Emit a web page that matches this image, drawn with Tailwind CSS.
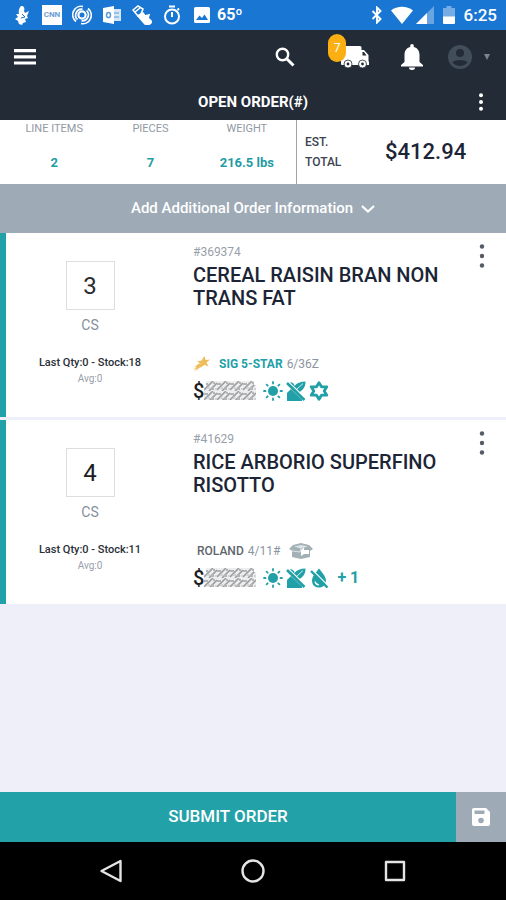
<!DOCTYPE html>
<html lang="en">
<head>
<meta charset="utf-8">
<meta name="viewport" content="width=device-width, initial-scale=1">
<title>Open Order</title>
<script src="https://cdn.jsdelivr.net/npm/@tailwindcss/browser@4"></script>
</head>
<body class="flex min-h-screen flex-col bg-[#efeffa] font-['Roboto',sans-serif] text-[#1c2536]">

<svg class="absolute h-0 w-0" aria-hidden="true">
  <defs>
  <pattern id="mosaic" width="13" height="10" patternUnits="userSpaceOnUse"><path d="M0 0h13v10H0z" fill="#eeeeef"/><path d="M0 9L9 0M5 10L13 2" stroke="#9c9ea0" stroke-width="1.600"/><path d="M0 2h4v2H0zM7 6h3v3H7zM9 1h2v2H9z" fill="#b3b5b7"/><path d="M3 6h3v2H3zM11 7h2v2h-2z" fill="#d2d3d5"/></pattern>
  </defs>
  <symbol id="kebab" viewBox="0 0 6 24"><circle cx="3" cy="2.500" r="2.200"/><circle cx="3" cy="12" r="2.200"/><circle cx="3" cy="21.500" r="2.200"/></symbol>
  <symbol id="sun" viewBox="0 0 20 20"><circle cx="10" cy="10" r="5"/><g stroke="currentColor" stroke-width="1.800" stroke-linecap="round"><path d="M10 1v1.500M10 17.500v1.500M1 10h1.500M17.500 10h1.500M3.600 3.600l1.100 1.100M15.300 15.300l1.100 1.100M3.600 16.400l1.100-1.100M15.300 4.700l1.100-1.100"/></g></symbol>
  <symbol id="nogluten" viewBox="0 0 20 20"><path d="M1 20V12L5 8L16 18.500V20Z"/><path d="M6.500 6C4.500 5 4 3 4.500 1C7.500 1.500 8.500 3.500 8.500 5C10.500 2 14.500 .500 19.500 .500C19.500 5 18 9 12.500 11.500Z"/><path d="M10.500 8.500L17 2.500" stroke="#fff" stroke-width=".8"/><path d="M2 .500L20 17.500" stroke="#fff" stroke-width="1.200"/><path d="M1 2L18.500 19" stroke="currentColor" stroke-width="2.600"/></symbol>
  <symbol id="hexstar" viewBox="0 0 20 20"><path fill="none" stroke="currentColor" stroke-width="2.800" stroke-linejoin="round" d="M10 1.700L12.500 5.800H17.800L15.200 10L17.800 14.200H12.500L10 18.300L7.500 14.200H2.200L4.800 10L2.200 5.800H7.500Z"/></symbol>
  <symbol id="nodrop" viewBox="0 0 20 20"><path d="M10 .500C12.500 4 17 8.500 17 12.500C17 17 14 19.500 10 19.500S3 17 3 12.500C3 8.500 7.500 4 10 .500Z"/><path d="M6 13.500C6.500 15.700 8 16.800 10 17" fill="none" stroke="#fff" stroke-width="1.200"/><path d="M3 1.500L20 18.500" stroke="#fff" stroke-width="1.200"/><path d="M2 3L18.500 19.500" stroke="currentColor" stroke-width="2.400"/></symbol>
  <symbol id="redacted" viewBox="0 0 52 20"><path fill="url(#mosaic)" d="M2 0H50V4H52V19H0V6H2Z"/></symbol>
</svg>

<div class="flex h-[30px] shrink-0 items-center justify-between bg-[#1976d2] pr-[9px] pl-[7px] text-white">
  <div class="flex items-center">
    <div class="grid w-[30px] place-items-center"><svg class="h-5 w-4" viewBox="0 0 16 20" fill="currentColor"><path d="M7 1c3-.5 4 2 3 5l1 2 4-2-2 5 1 2-3 1 1 3-3 1-1 2-3-1-1-3-3-2 3-2-2-3 3 0C4 7 5 3 7 1Z"/><path d="M8 9l3 3-4 1" fill="none" stroke="#1976d2" stroke-width="1"/></svg></div>
    <div class="grid w-[30px] place-items-center"><span class="grid h-5 w-5 place-items-center bg-white text-[8px] font-bold text-[#6e9fd4]">CNN</span></div>
    <div class="grid w-[30px] place-items-center"><svg class="h-5 w-5" viewBox="0 0 20 20" fill="none" stroke="currentColor" stroke-width="1.700"><circle cx="10" cy="10" r="3.600" stroke-width="2.200"/><path d="M4 16.500a8.500 8.500 0 0 1 7-15M16 3.500a8.500 8.500 0 0 1-7 15"/><path d="M5.500 14.500a6 6 0 0 1 5-10.300M14.500 5.500a6 6 0 0 1-5 10.300"/></svg></div>
    <div class="grid w-[30px] place-items-center"><svg class="h-[18px] w-[18px]" viewBox="0 0 18 18"><path d="M9 3h9v12H9z" fill="#d5e6f7"/><path d="M11 7h5M11 11h5" fill="none" stroke="#5d98d8" stroke-width="1.200"/><path d="M0 2l11-2v18L0 16z" fill="#fff"/><ellipse cx="5.500" cy="9" rx="2" ry="2.600" fill="none" stroke="#5d98d8" stroke-width="1.500"/></svg></div>
    <div class="grid w-[30px] place-items-center"><svg class="h-5 w-5" viewBox="0 0 20 20" fill="none" stroke="currentColor" stroke-width="1.600"><path d="M1 5l5-4 5 3-2 5-3 2z"/><path d="M3 7l5-4"/><path d="M6 11l5-3 2 3 4-1-1 3 4 4-3 2.500-4-.5z" fill="currentColor"/></svg></div>
    <div class="grid w-[30px] place-items-center"><svg class="h-5 w-5" viewBox="0 0 20 20" fill="none" stroke="currentColor" stroke-width="2"><circle cx="10" cy="11.500" r="7"/><path d="M10 7v5M7 1.500h6M15.500 5l1.500-1.500"/></svg></div>
    <div class="grid w-[30px] place-items-center"><svg class="h-4 w-4" viewBox="0 0 16 16"><rect width="16" height="16" rx="1.500" fill="#fff"/><path d="M2 13l3.500-4.500L8 11l2.500-3.500L14 13z" fill="#1976d2"/></svg></div>
    <span class="text-base leading-5 font-bold">65º</span>
  </div>
  <div class="flex items-center">
    <svg class="mr-2 h-[18px] w-3" viewBox="0 0 12 18" fill="none" stroke="currentColor" stroke-width="1.900"><path d="M1.500 5l8 8L6 16.500V1.500L9.500 5l-8 8"/></svg>
    <svg class="mr-[3px] h-[18px] w-[22px]" viewBox="0 0 22 18" fill="currentColor"><path d="M0 4.500C6-.5 16-.5 22 4.500L11 18Z"/></svg>
    <svg class="mr-[9px] h-[18px] w-[18px]" viewBox="0 0 18 18" fill="currentColor"><path d="M0 18L18 0V18Z" opacity=".35"/><path d="M0 18L11 7V18Z"/></svg>
    <svg class="mr-[9px] h-[18px] w-3" viewBox="0 0 12 18" fill="currentColor"><path d="M3.500 0h5v2H12v9H0V2h3.500z" opacity=".4"/><path d="M0 10.500h12V17a1 1 0 0 1-1 1H1a1 1 0 0 1-1-1z"/></svg>
    <span class="text-[17px] leading-5 font-medium">6:25</span>
  </div>
</div>

<header class="shrink-0 bg-[#232b37] text-white">
  <div class="flex h-[54px] items-center justify-between pr-4 pl-[14px]">
    <button type="button" aria-label="Menu"><svg class="h-4 w-[22px]" viewBox="0 0 22 16" fill="currentColor"><path d="M0 0h22v3.200H0zM0 6.200h22v3.200H0zM0 12.400h22v3.200H0z"/></svg></button>
    <div class="flex items-center">
      <button type="button" aria-label="Search" class="mr-[46px]"><svg class="h-5 w-5" viewBox="0 0 20 20" fill="none" stroke="currentColor"><circle cx="7.500" cy="7.500" r="5.700" stroke-width="2.400"/><path d="M12 12l6.500 6.500" stroke-width="3"/></svg></button>
      <button type="button" aria-label="Deliveries, 7" class="relative mr-8">
        <svg class="h-[22px] w-7" viewBox="0 0 28 22" fill="currentColor"><path d="M2 0h17a1.500 1.500 0 0 1 1.500 1.500V4H23l4.500 5v6l.5 1v3H1a1 1 0 0 1-1-1V2a2 2 0 0 1 2-2z"/><circle cx="7" cy="18" r="4" stroke="#232b37" stroke-width=".8"/><circle cx="21.500" cy="18" r="4" stroke="#232b37" stroke-width=".8"/><circle cx="7" cy="18" r="1.400" fill="#232b37"/><circle cx="21.500" cy="18" r="1.400" fill="#232b37"/><path d="M21.500 6h1.500l2.500 3.500h-4z" fill="#232b37"/></svg>
        <span class="absolute -top-3 -left-[13px] grid h-7 w-[18px] place-items-center rounded-full bg-[#fbaf12] text-xs">7</span>
      </button>
      <button type="button" aria-label="Notifications" class="mr-[25px]"><svg class="h-[26px] w-[22px]" viewBox="0 0 22 26" fill="currentColor"><path d="M9.200 3V1.800a1.800 1.800 0 0 1 3.600 0V3c4 1 5.700 4 5.700 8v7l3.500 3v1.500H0V21l3.500-3v-7c0-4 1.700-7 5.700-8z"/><path d="M8 23.500h6a3 2.500 0 0 1-6 0z"/></svg></button>
      <button type="button" aria-label="Account" class="flex items-center gap-3 text-[#414e5a]"><svg class="h-6 w-6" viewBox="0 0 24 24"><circle cx="12" cy="12" r="12" fill="currentColor"/><circle cx="12" cy="8" r="4" fill="#232b37"/><path d="M4.500 17.500C6 14 18 14 19.500 17.500C16 22 8 22 4.500 17.500Z" fill="#232b37"/></svg><svg class="h-[6px] w-[6px] text-[#7b8590]" viewBox="0 0 6 6" fill="currentColor"><path d="M0 0h6L3 6z"/></svg></button>
    </div>
  </div>
  <div class="grid h-9 grid-cols-[1fr_auto_1fr] items-center px-[22px]">
    <h1 class="col-start-2 text-[15px] font-bold">OPEN ORDER(#)</h1>
    <button type="button" aria-label="Order options" class="justify-self-end"><svg class="h-[18px] w-[6px]" viewBox="0 0 6 18" fill="currentColor"><circle cx="3" cy="2.300" r="2"/><circle cx="3" cy="9" r="2"/><circle cx="3" cy="15.700" r="2"/></svg></button>
  </div>
</header>

<main class="grow">
  <section class="grid grid-cols-[297fr_209fr] bg-white">
    <dl class="grid h-16 grid-cols-3 border-r border-[#a0a5ab] pt-px pr-px pl-[6px] text-center">
      <div><dt class="text-[11px] leading-4 text-[#9199a3]">LINE ITEMS</dt><dd class="mt-4 text-[13px] leading-5 font-bold text-[#1f9ca4]">2</dd></div>
      <div><dt class="text-[11px] leading-4 text-[#9199a3]">PIECES</dt><dd class="mt-4 text-[13px] leading-5 font-bold text-[#1f9ca4]">7</dd></div>
      <div><dt class="text-[11px] leading-4 text-[#9199a3]">WEIGHT</dt><dd class="mt-4 text-[13px] leading-5 font-bold text-[#1f9ca4]">216.5 lbs</dd></div>
    </dl>
    <div class="flex items-center gap-10 pl-2">
      <span class="w-10 text-xs leading-5 font-medium text-[#3c4452]">EST. TOTAL</span>
      <span class="text-[22px] leading-7 font-medium">$412.94</span>
    </div>
  </section>

  <button type="button" class="flex h-[49px] w-full items-center justify-center gap-2 bg-[#9eabb6] text-[15px] font-medium text-white">Add Additional Order Information<svg class="h-2 w-[14px]" viewBox="0 0 14 8" fill="none" stroke="currentColor" stroke-width="2.200"><path d="M1 1l6 5.500L13 1"/></svg></button>

  <ul class="flex flex-col gap-[3px]">
    <li class="grid h-[184px] grid-cols-[168fr_332fr] border-l-6 border-[#22a1a9] bg-white">
      <div class="flex flex-col items-center pt-7">
        <input id="qty1" type="text" inputmode="numeric" value="3" aria-label="Quantity, cereal raisin bran" class="h-[49px] w-[49px] border border-[#dcdfe2] text-center text-2xl text-[#2b2b2e]">
        <label for="qty1" class="mt-[5px] text-sm leading-5 text-[#858f9c]">CS</label>
        <p class="mt-5 text-[11px] leading-4 font-medium text-[#2a2f38]">Last Qty:0 - Stock:18</p>
        <p class="text-[10px] leading-4 text-[#98a0aa]">Avg:0</p>
      </div>
      <div class="flex pt-[11px] pr-[21px] pl-[19px]">
        <div class="grow">
          <p class="text-xs leading-4 text-[#98a0a9]">#369374</p>
          <h2 class="mt-1 w-64 text-xl leading-[23px] font-medium">CEREAL RAISIN BRAN NON TRANS FAT</h2>
          <p class="mt-11 flex h-5 items-center text-xs text-[#8c959f]"><svg class="mr-[9px] h-4 w-[17px]" viewBox="0 0 17 16" fill="#efbd58"><path d="M11.500 0l1 4 4.500-.5-3.500 3 2 4-4.200-1.800L7.500 12l.3-4.500L4 5.500l4.500-1z"/><path d="M7 7L1 11l3-.5L0 14l4-1.500L1.500 16 9 9.500z"/></svg><strong class="mr-1 font-bold text-[#22a0a8]">SIG 5-STAR</strong>6/36Z</p>
          <div class="mt-[6px] flex items-center text-[#22a0a8]">
            <span class="text-xl leading-[22px] font-medium text-[#1b1d22]">$</span>
            <svg role="img" aria-label="Price hidden" class="mr-[7px] h-5 w-[52px]"><use href="#redacted"/></svg>
            <svg class="mr-[3px] h-5 w-5 fill-current"><use href="#sun"/></svg>
            <svg class="mr-[3px] h-5 w-5 fill-current"><use href="#nogluten"/></svg>
            <svg class="h-5 w-5 fill-current"><use href="#hexstar"/></svg>
          </div>
        </div>
        <button type="button" aria-label="Item options" class="self-start text-[#555b64]"><svg class="h-6 w-[6px] fill-current"><use href="#kebab"/></svg></button>
      </div>
    </li>
    <li class="grid h-[184px] grid-cols-[168fr_332fr] border-l-6 border-[#22a1a9] bg-white">
      <div class="flex flex-col items-center pt-7">
        <input id="qty2" type="text" inputmode="numeric" value="4" aria-label="Quantity, rice arborio" class="h-[49px] w-[49px] border border-[#dcdfe2] text-center text-2xl text-[#1b1d22]">
        <label for="qty2" class="mt-[5px] text-sm leading-5 text-[#858f9c]">CS</label>
        <p class="mt-5 text-[11px] leading-4 font-medium text-[#2a2f38]">Last Qty:0 - Stock:11</p>
        <p class="text-[10px] leading-4 text-[#98a0aa]">Avg:0</p>
      </div>
      <div class="flex pt-[11px] pr-[21px] pl-[19px]">
        <div class="grow">
          <p class="text-xs leading-4 text-[#98a0a9]">#41629</p>
          <h2 class="mt-1 w-64 text-xl leading-[23px] font-medium">RICE ARBORIO SUPERFINO RISOTTO</h2>
          <p class="mt-11 flex h-5 items-center pl-1 text-xs text-[#8c959f]"><span class="mr-1 font-medium text-[#5f656d]">ROLAND</span>4/11#<svg class="ml-[9px] h-4 w-6" viewBox="0 0 24 16"><path d="M4 2l8-2 8 2 4 4-3 2v6l-9 2-9-2V8L0 6z" fill="#a3b0b4"/><path d="M5 3.500L12 2l7 1.500-7 2z" fill="#dde4e7"/><path d="M0 6l3 2 8 1 1-3.500" fill="none" stroke="#dde4e7"/><path d="M12 7l3-2.500V7h5v4h-5l-3 2z" fill="#fff"/></svg></p>
          <div class="mt-[6px] flex items-center text-[#22a0a8]">
            <span class="text-xl leading-[22px] font-medium text-[#1b1d22]">$</span>
            <svg role="img" aria-label="Price hidden" class="mr-[7px] h-5 w-[52px]"><use href="#redacted"/></svg>
            <svg class="mr-[3px] h-5 w-5 fill-current"><use href="#sun"/></svg>
            <svg class="mr-[3px] h-5 w-5 fill-current"><use href="#nogluten"/></svg>
            <svg class="mr-2 h-5 w-5 fill-current"><use href="#nodrop"/></svg>
            <span class="text-base leading-5 font-bold">+ 1</span>
          </div>
        </div>
        <button type="button" aria-label="Item options" class="self-start text-[#555b64]"><svg class="h-6 w-[6px] fill-current"><use href="#kebab"/></svg></button>
      </div>
    </li>
  </ul>
</main>

<div class="flex h-[50px] shrink-0 text-white">
  <button type="button" class="grow bg-[#22a1a9] text-[17px] font-medium">SUBMIT ORDER</button>
  <button type="button" aria-label="Save order" class="grid w-[50px] place-items-center bg-[#9eabb6]"><svg class="h-5 w-5" viewBox="0 0 20 20"><path d="M3 1h12l4 4v12a2 2 0 0 1-2 2H3a2 2 0 0 1-2-2V3a2 2 0 0 1 2-2z" fill="#fff"/><path d="M3.500 3.500h10V7h-10z" fill="#9eabb6"/><circle cx="10" cy="13.500" r="2.800" fill="#9eabb6"/></svg></button>
</div>

<nav class="flex h-[58px] shrink-0 items-center justify-around bg-black px-10 text-[#e4e4e4]">
  <button type="button" aria-label="Back"><svg class="h-6 w-6" viewBox="0 0 24 24" fill="none" stroke="currentColor" stroke-width="2.400" stroke-linejoin="round"><path d="M21.500 2v20L2.500 12z"/></svg></button>
  <button type="button" aria-label="Home"><svg class="h-6 w-6" viewBox="0 0 24 24" fill="none" stroke="currentColor" stroke-width="2.400"><circle cx="12" cy="12" r="10.500"/></svg></button>
  <button type="button" aria-label="Recent apps"><svg class="h-6 w-6" viewBox="0 0 24 24" fill="none" stroke="currentColor" stroke-width="2.400" stroke-linejoin="round"><path d="M3 3h18v18H3z"/></svg></button>
</nav>
</body>
</html>
